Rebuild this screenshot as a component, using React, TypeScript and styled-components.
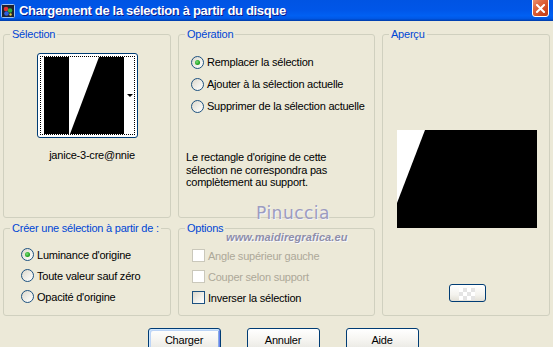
import React from "react";
import styled, { createGlobalStyle } from "styled-components";

const GlobalStyle = createGlobalStyle`
  html, body { margin: 0; padding: 0; background: #ECE9D8; }
  body {
    width: 553px; height: 347px; overflow: hidden;
    font-family: "Liberation Sans", Arial, sans-serif;
    font-size: 11px; color: #000;
    letter-spacing: -0.22px;
  }
`;

const Window = styled.div`
  position: relative;
  width: 553px; height: 347px;
  display: flex; flex-direction: column;
  background: #ECE9D8;
  overflow: hidden;
`;

const TitleBar = styled.div`
  height: 21px; flex: none;
  display: flex; align-items: center;
  padding: 0 4px 0 1px;
  overflow: hidden;
  background: linear-gradient(to bottom, #0054E3 0%, #0056E8 45%, #0060F3 75%, #0058E6 88%, #0046C0 96%, #0038A0 100%);
`;

const TitleText = styled.div`
  flex: 1;
  margin-left: 4px;
  color: #fff;
  font-family: "Liberation Sans", Arial, sans-serif;
  font-weight: bold;
  font-size: 13px;
  letter-spacing: -0.33px;
  text-shadow: 1px 1px 0 #0F1A89;
  white-space: nowrap;
`;

const CloseButton = styled.div`
  align-self: flex-start;
  margin-top: -3px;
  width: 17px; height: 20px;
  box-sizing: border-box;
  border: 1px solid #fff;
  border-radius: 3px;
  background: linear-gradient(135deg, #EB9C7E 0%, #E16A43 35%, #D24C24 70%, #C23A14 100%);
  display: flex; align-items: center; justify-content: center;
  padding-top: 3px;
`;

const Body = styled.div`
  flex: 1;
  display: flex; flex-direction: column;
  padding: 7px 2px 0 3px;
`;

const Grid = styled.div`
  display: grid;
  grid-template-columns: 168px 197px 168px;
  grid-template-rows: 190px 94px;
  column-gap: 7px;
  row-gap: 4px;
  grid-template-areas:
    "sel op prev"
    "cre opt prev";
`;

const Group = styled.fieldset<{ $area: string }>`
  grid-area: ${(p) => p.$area};
  margin: 0; padding: 0; min-width: 0;
  border: 1px solid #D0D0BF;
  border-radius: 3px;
  display: flex; flex-direction: column;
`;

const Legend = styled.legend`
  color: #0046D5;
  padding: 0 2px;
  margin-left: 6px;
  line-height: 13px;
  font-size: 11px;
`;

const SelectionContent = styled.div`
  display: flex; flex-direction: column; align-items: center;
  padding-top: 12px;
`;

const Thumb = styled.div`
  width: 101px; height: 85px;
  box-sizing: border-box;
  border: 1px solid #003C74;
  border-radius: 3px;
  background: #fff;
  padding: 2px;
  display: flex;
`;

const FocusRect = styled.div`
  position: relative;
  flex: 1;
  border: 1px dotted #000;
  padding: 0 0 0 3px;
  display: flex; align-items: flex-start;
`;

const DropArrow = styled.div`
  position: absolute;
  right: 1px; top: 37px;
  width: 0; height: 0;
  border-left: 3px solid transparent;
  border-right: 3px solid transparent;
  border-top: 3px solid #000;
`;

const FileName = styled.div`
  margin-top: 11px;
  padding-left: 10px;
  line-height: 13px;
`;

const OpContent = styled.div`
  display: flex; flex-direction: column;
  padding: 10px 0 0 7px;
`;

const OptionList = styled.div<{ $indent: number; $top: number; $row: number }>`
  display: flex; flex-direction: column;
  padding-left: ${(p) => p.$indent}px;
  padding-top: ${(p) => p.$top}px;
  & > * { height: ${(p) => p.$row}px; }
`;

const OptionRow = styled.div<{ $disabled?: boolean }>`
  display: flex; align-items: center; gap: 3px;
  color: ${(p) => (p.$disabled ? "#ACA899" : "#000")};
  white-space: nowrap;
`;

const Radio = styled.span<{ $checked?: boolean }>`
  flex: none;
  width: 13px; height: 13px;
  box-sizing: border-box;
  border-radius: 50%;
  border: 1px solid #1C5180;
  background: linear-gradient(135deg, #DCD7CB 0%, #F0EFE9 55%, #FFFFFF 100%);
  display: flex; align-items: center; justify-content: center;
  &::after {
    content: "";
    display: ${(p) => (p.$checked ? "block" : "none")};
    width: 5px; height: 5px;
    border-radius: 50%;
    background: radial-gradient(circle at 40% 40%, #7BE07B 0%, #21A121 60%, #168A16 100%);
  }
`;

const Check = styled.span<{ $disabled?: boolean }>`
  flex: none;
  width: 13px; height: 13px;
  box-sizing: border-box;
  border: 1px solid ${(p) => (p.$disabled ? "#CAC8BB" : "#1C5180")};
  background: ${(p) =>
    p.$disabled ? "#FFFFFF" : "linear-gradient(135deg, #DCD7CB 0%, #F0EFE9 55%, #FFFFFF 100%)"};
`;

const Note = styled.div`
  margin-top: 34px;
  line-height: 12.5px;
`;

const PreviewContent = styled.div`
  display: flex; flex-direction: column; align-items: center;
  padding-top: 89px;
  padding-left: 2px;
`;

const SwatchButton = styled.div`
  margin-top: 56px;
  width: 37px; height: 18px;
  box-sizing: border-box;
  border: 1px solid #003C74;
  border-radius: 3px;
  background: linear-gradient(to bottom, #FFFFFF 0%, #F4F3EE 60%, #E3E0D6 100%);
  display: flex; align-items: center; justify-content: center;
`;

const Checker = styled.span`
  width: 16px; height: 12px;
  margin-top: 2px;
  background: repeating-conic-gradient(#E4E4E4 0 25%, #FFFFFF 0 50%) 0 0 / 8px 8px;
`;

const ButtonRow = styled.div`
  display: flex; justify-content: center; gap: 26px;
  margin-top: 12px;
  padding-left: 12px;
`;

const Button = styled.div<{ $default?: boolean }>`
  width: 73px; height: 23px;
  box-sizing: border-box;
  border: 1px solid #003C74;
  border-radius: 3px;
  background: linear-gradient(to bottom, #FFFFFF 0%, #F6F5F1 50%, #ECEBE6 85%, #D6D0C5 100%);
  display: flex; align-items: center; justify-content: center;
  font-size: 11px;
  ${(p) =>
    p.$default
      ? "box-shadow: inset 1px 1px 0 #CEE7FF, inset -1px -1px 0 #6982EE, inset 2px 2px 0 #BCD4F6, inset -2px -2px 0 #89ADE4;"
      : ""}
`;

const WatermarkName = styled.div`
  position: absolute;
  left: 256px; top: 203px;
  font-family: "DejaVu Sans", sans-serif;
  font-size: 17px;
  letter-spacing: 0.5px;
  color: #9C9CC0;
  text-shadow: 1px 1px 0 #F4F4FA;
  pointer-events: none;
`;

const WatermarkUrl = styled.div`
  position: absolute;
  left: 226px; top: 231px;
  font-family: "Liberation Sans", sans-serif;
  font-weight: bold;
  font-style: italic;
  font-size: 11px;
  letter-spacing: 0.1px;
  color: #8E8EAA;
  text-shadow: 1px 1px 0 #F8F8FC;
  pointer-events: none;
`;

const TitleIcon = () => (
  <svg width="14" height="14" viewBox="0 0 14 14">
    <rect x="0.5" y="0.5" width="13" height="13" rx="1" fill="#1E2230" stroke="#9CC2F0" />
    <circle cx="5" cy="5" r="2.3" fill="#E03030" />
    <circle cx="9" cy="6.5" r="2.3" fill="#30B040" />
    <circle cx="5.5" cy="9.5" r="2.3" fill="#3060E0" />
    <circle cx="9.5" cy="10.5" r="1.2" fill="#E0D040" />
  </svg>
);

const CloseX = () => (
  <svg width="9" height="9" viewBox="0 0 9 9">
    <path d="M1 1 L8 8 M8 1 L1 8" stroke="#fff" strokeWidth="2" strokeLinecap="square" />
  </svg>
);

const ThumbImage = () => (
  <svg width="90" height="77" viewBox="0 0 90 77">
    <rect width="90" height="77" fill="#fff" />
    <rect x="0" y="0" width="25" height="77" fill="#000" />
    <polygon points="55,0 80,0 80,77 26,77" fill="#000" />
  </svg>
);

const PreviewImage = () => (
  <svg width="140" height="98" viewBox="0 0 140 98">
    <rect width="140" height="98" fill="#000" />
    <polygon points="0,0 28,0 0,73" fill="#fff" />
  </svg>
);

export default function App() {
  return (
    <>
      <GlobalStyle />
      <Window>
        <TitleBar>
          <TitleIcon />
          <TitleText>Chargement de la sélection à partir du disque</TitleText>
          <CloseButton>
            <CloseX />
          </CloseButton>
        </TitleBar>
        <Body>
          <Grid>
            <Group $area="sel">
              <Legend>Sélection</Legend>
              <SelectionContent>
                <Thumb>
                  <FocusRect>
                    <ThumbImage />
                    <DropArrow />
                  </FocusRect>
                </Thumb>
                <FileName>janice-3-cre@nnie</FileName>
              </SelectionContent>
            </Group>

            <Group $area="op">
              <Legend>Opération</Legend>
              <OpContent>
                <OptionList $indent={5} $top={0} $row={22}>
                  <OptionRow><Radio $checked />Remplacer la sélection</OptionRow>
                  <OptionRow><Radio />Ajouter à la sélection actuelle</OptionRow>
                  <OptionRow><Radio />Supprimer de la sélection actuelle</OptionRow>
                </OptionList>
                <Note>
                  Le rectangle d'origine de cette
                  <br />
                  sélection ne correspondra pas
                  <br />
                  complètement au support.
                </Note>
              </OpContent>
            </Group>

            <Group $area="prev">
              <Legend>Aperçu</Legend>
              <PreviewContent>
                <PreviewImage />
                <SwatchButton>
                  <Checker />
                </SwatchButton>
              </PreviewContent>
            </Group>

            <Group $area="cre">
              <Legend>Créer une sélection à partir de :</Legend>
              <OptionList $indent={17} $top={9} $row={21}>
                <OptionRow><Radio $checked />Luminance d'origine</OptionRow>
                <OptionRow><Radio />Toute valeur sauf zéro</OptionRow>
                <OptionRow><Radio />Opacité d'origine</OptionRow>
              </OptionList>
            </Group>

            <Group $area="opt">
              <Legend>Options</Legend>
              <OptionList $indent={13} $top={10} $row={21}>
                <OptionRow $disabled><Check $disabled />Angle supérieur gauche</OptionRow>
                <OptionRow $disabled><Check $disabled />Couper selon support</OptionRow>
                <OptionRow><Check />Inverser la sélection</OptionRow>
              </OptionList>
            </Group>
          </Grid>

          <ButtonRow>
            <Button $default>Charger</Button>
            <Button>Annuler</Button>
            <Button>Aide</Button>
          </ButtonRow>
        </Body>

        <WatermarkName>Pinuccia</WatermarkName>
        <WatermarkUrl>www.maidiregrafica.eu</WatermarkUrl>
      </Window>
    </>
  );
}
